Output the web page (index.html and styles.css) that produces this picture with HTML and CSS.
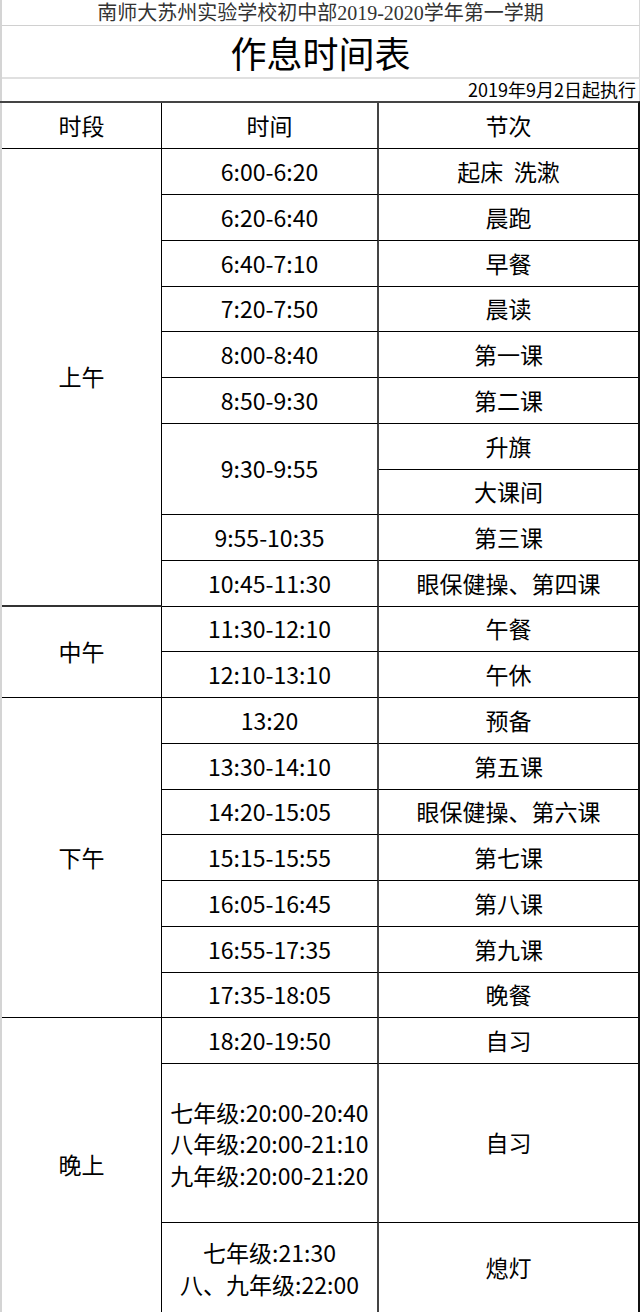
FILE: index.html
```html
<!DOCTYPE html>
<html lang="zh">
<head>
<meta charset="utf-8">
<link rel="stylesheet" href="styles.css">
<title>作息时间表</title>
</head>
<body>
<div class="sheet">
  <div class="school">南师大苏州实验学校初中部2019-2020学年第一学期</div>
  <div class="title">作息时间表</div>
  <div class="date">2019年9月2日起执行</div>
  <div class="grid">
    <div class="c c1 h">时段</div>
    <div class="c c2 h">时间</div>
    <div class="c c3 h">节次</div>

    <div class="c c1 am">上午</div>
    <div class="c c2">6:00-6:20</div><div class="c c3">起床&nbsp;&nbsp;洗漱</div>
    <div class="c c2">6:20-6:40</div><div class="c c3">晨跑</div>
    <div class="c c2">6:40-7:10</div><div class="c c3">早餐</div>
    <div class="c c2">7:20-7:50</div><div class="c c3">晨读</div>
    <div class="c c2">8:00-8:40</div><div class="c c3">第一课</div>
    <div class="c c2">8:50-9:30</div><div class="c c3">第二课</div>
    <div class="c c2 span2">9:30-9:55</div><div class="c c3">升旗</div>
    <div class="c c3">大课间</div>
    <div class="c c2">9:55-10:35</div><div class="c c3">第三课</div>
    <div class="c c2">10:45-11:30</div><div class="c c3">眼保健操、第四课</div>

    <div class="c c1 noon">中午</div>
    <div class="c c2">11:30-12:10</div><div class="c c3">午餐</div>
    <div class="c c2">12:10-13:10</div><div class="c c3">午休</div>

    <div class="c c1 pm">下午</div>
    <div class="c c2">13:20</div><div class="c c3">预备</div>
    <div class="c c2">13:30-14:10</div><div class="c c3">第五课</div>
    <div class="c c2">14:20-15:05</div><div class="c c3">眼保健操、第六课</div>
    <div class="c c2">15:15-15:55</div><div class="c c3">第七课</div>
    <div class="c c2">16:05-16:45</div><div class="c c3">第八课</div>
    <div class="c c2">16:55-17:35</div><div class="c c3">第九课</div>
    <div class="c c2">17:35-18:05</div><div class="c c3">晚餐</div>

    <div class="c c1 eve">晚上</div>
    <div class="c c2">18:20-19:50</div><div class="c c3">自习</div>
    <div class="c c2 multi">七年级:20:00-20:40<br>八年级:20:00-21:10<br>九年级:20:00-21:20</div><div class="c c3">自习</div>
    <div class="c c2 multi last">七年级:21:30<br>八、九年级:22:00</div><div class="c c3 last">熄灯</div>
  </div>
</div>
</body>
</html>
```

FILE: styles.css
```css
html, body {
  margin: 0;
  padding: 0;
  background: #fff;
}
body {
  font-family: "Noto Sans CJK SC", "Noto Sans", sans-serif;
  color: #000;
}
.sheet {
  width: 640px;
  border-left: 2px solid #d4d4d4;
  box-sizing: border-box;
}
.school {
  height: 25px;
  border-bottom: 1px solid #d0d0d0;
  border-right: 1px solid #d8d8d8;
  font-family: "Liberation Serif", "Noto Sans CJK SC", serif;
  font-size: 20px;
  color: #333;
  display: flex;
  align-items: center;
  justify-content: center;
  line-height: 1;
  white-space: nowrap;
}
.title {
  height: 51px;
  border-bottom: 2px solid #e0e0e0;
  border-right: 1px solid #d8d8d8;
  font-size: 36px;
  display: flex;
  align-items: center;
  justify-content: center;
  line-height: 1;
}
.date {
  height: 22px;
  border-right: 1px solid #d8d8d8;
  font-size: 18px;
  display: flex;
  align-items: center;
  justify-content: flex-end;
  padding-right: 3px;
  padding-bottom: 2px;
  box-sizing: border-box;
  line-height: 1;
}
.grid {
  display: grid;
  grid-template-columns: 160px 217px 259px;
  grid-template-rows: 46px 46px 46px 46px 45px 46px 46px 46px 45px 46px 46px 45px 46px 46px 46px 45px 46px 46px 46px 45px 46px 159px 89px;
  border-top: 2px solid #444;
  border-right: 2px solid #111;
  border-bottom: 2px solid #111;
  margin-left: -2px;
  width: 640px;
  box-sizing: border-box;
  padding-left: 2px;
}
.c {
  box-sizing: border-box;
  border-bottom: 1px solid #000;
  display: flex;
  align-items: center;
  justify-content: center;
  text-align: center;
  font-size: 23px;
  line-height: 1.3;
}
.c1 {
  grid-column: 1;
  border-right: 1px solid #000;
}
.c2 {
  grid-column: 2;
  border-right: 2px solid #444;
}
.c3 {
  grid-column: 3;
}
.am { grid-row: 2 / span 10; border-bottom: 2px solid #333; }
.noon { grid-row: 12 / span 2; }
.pm { grid-row: 14 / span 7; }
.eve { grid-row: 21 / span 3; border-bottom: none; }
.span2 { grid-row: span 2; }
.multi { line-height: 1.37; padding-top: 2px; }
.last { border-bottom: none; }
```
